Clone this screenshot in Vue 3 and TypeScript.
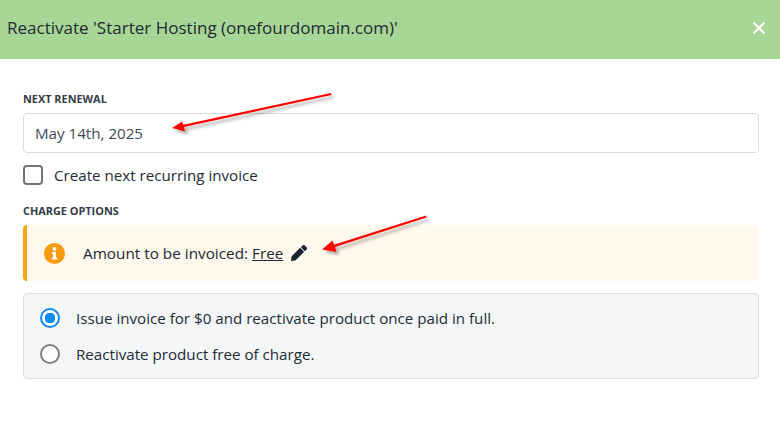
<script setup lang="ts">
const title = "Reactivate 'Starter Hosting (onefourdomain.com)'";
const options = [
  { id: 'invoice', label: 'Issue invoice for $0 and reactivate product once paid in full.', checked: true },
  { id: 'free', label: 'Reactivate product free of charge.', checked: false },
];
</script>

<template>
  <div class="modal">
    <header class="modal-header">
      <h1 class="modal-title">{{ title }}</h1>
      <svg class="close" width="14" height="14" viewBox="0 0 14 14">
        <path d="M1.5 1.5 L12.5 12.5 M12.5 1.5 L1.5 12.5" stroke="#fff" stroke-width="2.2" fill="none" />
      </svg>
    </header>

    <div class="modal-body">
      <label class="field-label">NEXT RENEWAL</label>
      <div class="input">May 14th, 2025</div>

      <div class="check-row">
        <span class="checkbox"></span>
        <span>Create next recurring invoice</span>
      </div>

      <label class="field-label charge-label">CHARGE OPTIONS</label>
      <div class="alert">
        <svg class="info" width="21" height="21" viewBox="0 0 21 21">
          <circle cx="10.5" cy="10.5" r="10.5" fill="#f89c0e" />
          <circle cx="10.5" cy="6" r="1.9" fill="#fff" />
          <path d="M8 9h4v5.4h1.2v2H8v-2h1.2v-3.4H8z" fill="#fff" />
        </svg>
        <span class="alert-text">Amount to be invoiced: <u>Free</u></span>
        <svg class="pencil" width="16" height="16" viewBox="0 0 512 512">
          <path fill="#1b2530" d="M497.9 142.1l-46.1 46.1c-4.7 4.7-12.3 4.7-17 0l-111-111c-4.7-4.7-4.7-12.3 0-17l46.1-46.1c18.7-18.7 49.1-18.7 67.9 0l60.1 60.1c18.8 18.7 18.8 49.1 0 67.9zM284.2 99.8L21.6 362.4.4 483.9c-2.9 16.4 11.4 30.6 27.8 27.8l121.5-21.3 262.6-262.6c4.7-4.7 4.7-12.3 0-17l-111-111c-4.8-4.7-12.4-4.7-17.1 0z" />
        </svg>
      </div>

      <div class="radio-box">
        <div v-for="opt in options" :key="opt.id" class="radio-row">
          <span class="radio" :class="{ checked: opt.checked }"></span>
          <span>{{ opt.label }}</span>
        </div>
      </div>
    </div>

    <svg class="arrows" width="780" height="429" viewBox="0 0 780 429">
      <defs>
        <filter id="shadow" x="-10%" y="-30%" width="120%" height="180%">
          <feDropShadow dx="3" dy="3" stdDeviation="1.5" flood-color="#000" flood-opacity="0.3" />
        </filter>
      </defs>
      <g filter="url(#shadow)" fill="#f00" stroke="none">
        <path d="M331 93 L331.5 95 L184 127 L185 131.5 L172 128 L182 121.5 L183.4 124.8 Z" />
        <path d="M426 215.6 L426.6 217.6 L335 247 L336.5 252 L322 249.5 L332.5 240.5 L334 244.8 Z" />
      </g>
    </svg>
  </div>
</template>

<style scoped>
.modal {
  position: relative;
  width: 780px;
  height: 429px;
  overflow: hidden;
  background: #fff;
  font-family: "Open Sans", "Noto Sans", sans-serif;
  color: #212b36;
  font-size: 15.15px;
}

.modal-header {
  height: 59px;
  box-sizing: border-box;
  background: #a8d696;
  display: flex;
  align-items: center;
  justify-content: space-between;
  padding: 0 14px 4px 7px;
}

.modal-title {
  margin: 0;
  font-size: 17.05px;
  font-weight: 400;
  color: #1f2a30;
}

.close {
  display: block;
}

.modal-body {
  padding: 33px 21px 0 23px;
}

.field-label {
  display: block;
  font-size: 10.9px;
  line-height: 14px;
  font-weight: 700;
  color: #333b44;
}

.input {
  margin-top: 7px;
  height: 40px;
  box-sizing: border-box;
  border: 1px solid #d9dbde;
  border-radius: 4px;
  padding: 0 11px;
  display: flex;
  align-items: center;
  color: #3f4a56;
}

.check-row {
  margin-top: 11px;
  display: flex;
  align-items: center;
  gap: 11px;
  height: 22px;
}

.checkbox {
  width: 20px;
  height: 20px;
  box-sizing: border-box;
  border: 2px solid #6f7478;
  border-radius: 4px;
}

.charge-label {
  margin-top: 18px;
}

.alert {
  margin-top: 7px;
  height: 56px;
  box-sizing: border-box;
  background: #fff8ec;
  border-left: 4px solid #f9a51a;
  border-radius: 4px;
  display: flex;
  align-items: center;
  padding-left: 17px;
}

.alert-text {
  margin-left: 18px;
  font-size: 15.3px;
}

.pencil {
  margin-left: 8px;
}

.radio-box {
  margin-top: 12px;
  height: 86px;
  box-sizing: border-box;
  background: #f5f6f8;
  border: 1px solid #dcdee1;
  border-radius: 4px;
  padding: 7px 16px;
  display: flex;
  flex-direction: column;
  justify-content: center;
  gap: 14px;
}

.radio-row {
  display: flex;
  align-items: center;
  gap: 16px;
  height: 22px;
}

.radio {
  width: 20px;
  height: 20px;
  box-sizing: border-box;
  border: 2px solid #7d7f82;
  border-radius: 50%;
  background: #fff;
}

.radio.checked {
  border-color: #0d8bf5;
  background: radial-gradient(circle, #0d8bf5 0 5px, #fff 5.5px);
}

.arrows {
  position: absolute;
  left: 0;
  top: 0;
  pointer-events: none;
}
</style>
